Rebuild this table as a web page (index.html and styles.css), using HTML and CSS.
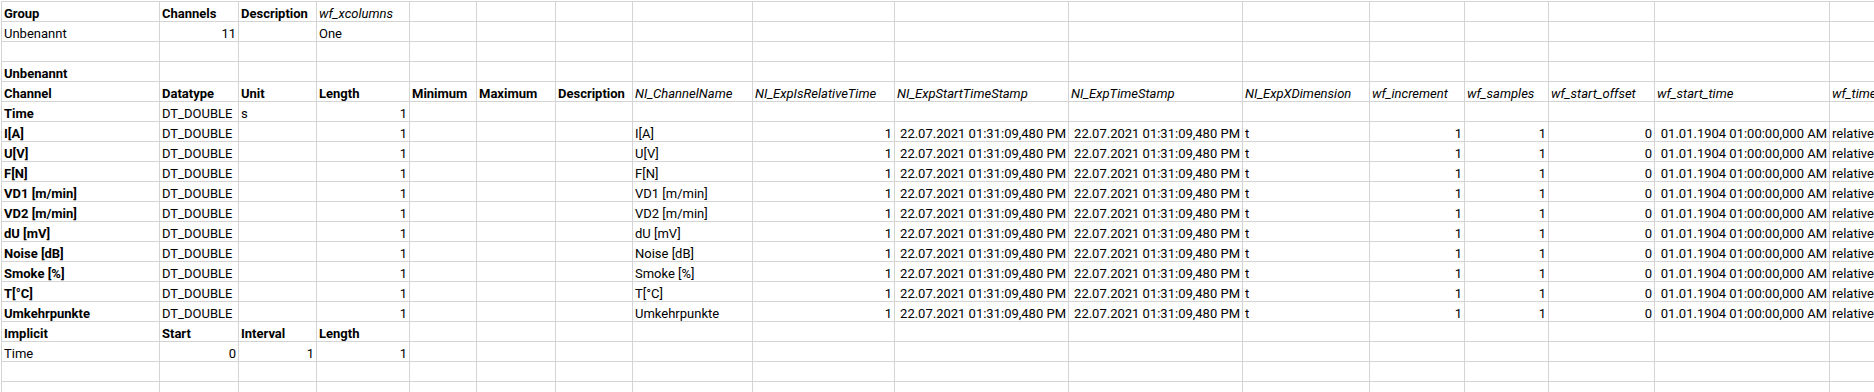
FILE: index.html
```html
<!DOCTYPE html>
<html lang="de">
<head>
<meta charset="utf-8">
<title>Unbenannt</title>
<link rel="stylesheet" href="styles.css">
</head>
<body>
<div class="sheet">
  <!-- row 1 -->
  <div class="c b">Group</div><div class="c b">Channels</div><div class="c b">Description</div><div class="c i">wf_xcolumns</div><div class="c"></div><div class="c"></div><div class="c"></div><div class="c"></div><div class="c"></div><div class="c"></div><div class="c"></div><div class="c"></div><div class="c"></div><div class="c"></div><div class="c"></div><div class="c"></div><div class="c"></div>
  <!-- row 2 -->
  <div class="c">Unbenannt</div><div class="c r">11</div><div class="c"></div><div class="c">One</div><div class="c"></div><div class="c"></div><div class="c"></div><div class="c"></div><div class="c"></div><div class="c"></div><div class="c"></div><div class="c"></div><div class="c"></div><div class="c"></div><div class="c"></div><div class="c"></div><div class="c"></div>
  <!-- row 3 -->
  <div class="c"></div><div class="c"></div><div class="c"></div><div class="c"></div><div class="c"></div><div class="c"></div><div class="c"></div><div class="c"></div><div class="c"></div><div class="c"></div><div class="c"></div><div class="c"></div><div class="c"></div><div class="c"></div><div class="c"></div><div class="c"></div><div class="c"></div>
  <!-- row 4 -->
  <div class="c b">Unbenannt</div><div class="c"></div><div class="c"></div><div class="c"></div><div class="c"></div><div class="c"></div><div class="c"></div><div class="c"></div><div class="c"></div><div class="c"></div><div class="c"></div><div class="c"></div><div class="c"></div><div class="c"></div><div class="c"></div><div class="c"></div><div class="c"></div>
  <!-- row 5 -->
  <div class="c b">Channel</div><div class="c b">Datatype</div><div class="c b">Unit</div><div class="c b">Length</div><div class="c b">Minimum</div><div class="c b">Maximum</div><div class="c b">Description</div><div class="c i">NI_ChannelName</div><div class="c i">NI_ExpIsRelativeTime</div><div class="c i">NI_ExpStartTimeStamp</div><div class="c i">NI_ExpTimeStamp</div><div class="c i">NI_ExpXDimension</div><div class="c i">wf_increment</div><div class="c i">wf_samples</div><div class="c i">wf_start_offset</div><div class="c i">wf_start_time</div><div class="c i">wf_time_pref</div>
  <!-- row 6 -->
  <div class="c b">Time</div><div class="c">DT_DOUBLE</div><div class="c">s</div><div class="c r">1</div><div class="c"></div><div class="c"></div><div class="c"></div><div class="c"></div><div class="c"></div><div class="c"></div><div class="c"></div><div class="c"></div><div class="c"></div><div class="c"></div><div class="c"></div><div class="c"></div><div class="c"></div>
  <!-- row 7 -->
  <div class="c b">I[A]</div><div class="c">DT_DOUBLE</div><div class="c"></div><div class="c r">1</div><div class="c"></div><div class="c"></div><div class="c"></div><div class="c">I[A]</div><div class="c r">1</div><div class="c r">22.07.2021 01:31:09,480 PM</div><div class="c r">22.07.2021 01:31:09,480 PM</div><div class="c">t</div><div class="c r">1</div><div class="c r">1</div><div class="c r">0</div><div class="c r">01.01.1904 01:00:00,000 AM</div><div class="c">relative</div>
  <!-- row 8 -->
  <div class="c b">U[V]</div><div class="c">DT_DOUBLE</div><div class="c"></div><div class="c r">1</div><div class="c"></div><div class="c"></div><div class="c"></div><div class="c">U[V]</div><div class="c r">1</div><div class="c r">22.07.2021 01:31:09,480 PM</div><div class="c r">22.07.2021 01:31:09,480 PM</div><div class="c">t</div><div class="c r">1</div><div class="c r">1</div><div class="c r">0</div><div class="c r">01.01.1904 01:00:00,000 AM</div><div class="c">relative</div>
  <!-- row 9 -->
  <div class="c b">F[N]</div><div class="c">DT_DOUBLE</div><div class="c"></div><div class="c r">1</div><div class="c"></div><div class="c"></div><div class="c"></div><div class="c">F[N]</div><div class="c r">1</div><div class="c r">22.07.2021 01:31:09,480 PM</div><div class="c r">22.07.2021 01:31:09,480 PM</div><div class="c">t</div><div class="c r">1</div><div class="c r">1</div><div class="c r">0</div><div class="c r">01.01.1904 01:00:00,000 AM</div><div class="c">relative</div>
  <!-- row 10 -->
  <div class="c b">VD1 [m/min]</div><div class="c">DT_DOUBLE</div><div class="c"></div><div class="c r">1</div><div class="c"></div><div class="c"></div><div class="c"></div><div class="c">VD1 [m/min]</div><div class="c r">1</div><div class="c r">22.07.2021 01:31:09,480 PM</div><div class="c r">22.07.2021 01:31:09,480 PM</div><div class="c">t</div><div class="c r">1</div><div class="c r">1</div><div class="c r">0</div><div class="c r">01.01.1904 01:00:00,000 AM</div><div class="c">relative</div>
  <!-- row 11 -->
  <div class="c b">VD2 [m/min]</div><div class="c">DT_DOUBLE</div><div class="c"></div><div class="c r">1</div><div class="c"></div><div class="c"></div><div class="c"></div><div class="c">VD2 [m/min]</div><div class="c r">1</div><div class="c r">22.07.2021 01:31:09,480 PM</div><div class="c r">22.07.2021 01:31:09,480 PM</div><div class="c">t</div><div class="c r">1</div><div class="c r">1</div><div class="c r">0</div><div class="c r">01.01.1904 01:00:00,000 AM</div><div class="c">relative</div>
  <!-- row 12 -->
  <div class="c b">dU [mV]</div><div class="c">DT_DOUBLE</div><div class="c"></div><div class="c r">1</div><div class="c"></div><div class="c"></div><div class="c"></div><div class="c">dU [mV]</div><div class="c r">1</div><div class="c r">22.07.2021 01:31:09,480 PM</div><div class="c r">22.07.2021 01:31:09,480 PM</div><div class="c">t</div><div class="c r">1</div><div class="c r">1</div><div class="c r">0</div><div class="c r">01.01.1904 01:00:00,000 AM</div><div class="c">relative</div>
  <!-- row 13 -->
  <div class="c b">Noise [dB]</div><div class="c">DT_DOUBLE</div><div class="c"></div><div class="c r">1</div><div class="c"></div><div class="c"></div><div class="c"></div><div class="c">Noise [dB]</div><div class="c r">1</div><div class="c r">22.07.2021 01:31:09,480 PM</div><div class="c r">22.07.2021 01:31:09,480 PM</div><div class="c">t</div><div class="c r">1</div><div class="c r">1</div><div class="c r">0</div><div class="c r">01.01.1904 01:00:00,000 AM</div><div class="c">relative</div>
  <!-- row 14 -->
  <div class="c b">Smoke [%]</div><div class="c">DT_DOUBLE</div><div class="c"></div><div class="c r">1</div><div class="c"></div><div class="c"></div><div class="c"></div><div class="c">Smoke [%]</div><div class="c r">1</div><div class="c r">22.07.2021 01:31:09,480 PM</div><div class="c r">22.07.2021 01:31:09,480 PM</div><div class="c">t</div><div class="c r">1</div><div class="c r">1</div><div class="c r">0</div><div class="c r">01.01.1904 01:00:00,000 AM</div><div class="c">relative</div>
  <!-- row 15 -->
  <div class="c b">T[°C]</div><div class="c">DT_DOUBLE</div><div class="c"></div><div class="c r">1</div><div class="c"></div><div class="c"></div><div class="c"></div><div class="c">T[°C]</div><div class="c r">1</div><div class="c r">22.07.2021 01:31:09,480 PM</div><div class="c r">22.07.2021 01:31:09,480 PM</div><div class="c">t</div><div class="c r">1</div><div class="c r">1</div><div class="c r">0</div><div class="c r">01.01.1904 01:00:00,000 AM</div><div class="c">relative</div>
  <!-- row 16 -->
  <div class="c b">Umkehrpunkte</div><div class="c">DT_DOUBLE</div><div class="c"></div><div class="c r">1</div><div class="c"></div><div class="c"></div><div class="c"></div><div class="c">Umkehrpunkte</div><div class="c r">1</div><div class="c r">22.07.2021 01:31:09,480 PM</div><div class="c r">22.07.2021 01:31:09,480 PM</div><div class="c">t</div><div class="c r">1</div><div class="c r">1</div><div class="c r">0</div><div class="c r">01.01.1904 01:00:00,000 AM</div><div class="c">relative</div>
  <!-- row 17 -->
  <div class="c b">Implicit</div><div class="c b">Start</div><div class="c b">Interval</div><div class="c b">Length</div><div class="c"></div><div class="c"></div><div class="c"></div><div class="c"></div><div class="c"></div><div class="c"></div><div class="c"></div><div class="c"></div><div class="c"></div><div class="c"></div><div class="c"></div><div class="c"></div><div class="c"></div>
  <!-- row 18 -->
  <div class="c">Time</div><div class="c r">0</div><div class="c r">1</div><div class="c r">1</div><div class="c"></div><div class="c"></div><div class="c"></div><div class="c"></div><div class="c"></div><div class="c"></div><div class="c"></div><div class="c"></div><div class="c"></div><div class="c"></div><div class="c"></div><div class="c"></div><div class="c"></div>
  <!-- row 19 -->
  <div class="c"></div><div class="c"></div><div class="c"></div><div class="c"></div><div class="c"></div><div class="c"></div><div class="c"></div><div class="c"></div><div class="c"></div><div class="c"></div><div class="c"></div><div class="c"></div><div class="c"></div><div class="c"></div><div class="c"></div><div class="c"></div><div class="c"></div>
  <!-- row 20 -->
  <div class="c"></div><div class="c"></div><div class="c"></div><div class="c"></div><div class="c"></div><div class="c"></div><div class="c"></div><div class="c"></div><div class="c"></div><div class="c"></div><div class="c"></div><div class="c"></div><div class="c"></div><div class="c"></div><div class="c"></div><div class="c"></div><div class="c"></div>
</div>
</body>
</html>
```

FILE: styles.css
```css
html, body {
  margin: 0;
  padding: 0;
  background: #ffffff;
  overflow: hidden;
}

body {
  width: 1874px;
  height: 392px;
  font-family: Roboto, "Liberation Sans", sans-serif;
  font-size: 13px;
  color: #000000;
}

.sheet {
  display: grid;
  grid-template-columns: 158px 79px 78px 93px 67px 79px 77px 120px 142px 174px 174px 127px 95px 84px 106px 175px 140px;
  grid-auto-rows: 20px;
  margin: 1px 0 0 1px;
  width: max-content;
  border-left: 1px solid #d4d4d4;
  border-top: 1px solid #d4d4d4;
}

.c {
  box-sizing: border-box;
  height: 20px;
  border-right: 1px solid #d4d4d4;
  border-bottom: 1px solid #d4d4d4;
  padding: 0 2px;
  display: flex;
  align-items: flex-end;
  justify-content: flex-start;
  line-height: 15px;
  white-space: nowrap;
  overflow: hidden;
}

.b {
  font-weight: 700;
}

.i {
  font-style: italic;
}

.r {
  justify-content: flex-end;
}
```
